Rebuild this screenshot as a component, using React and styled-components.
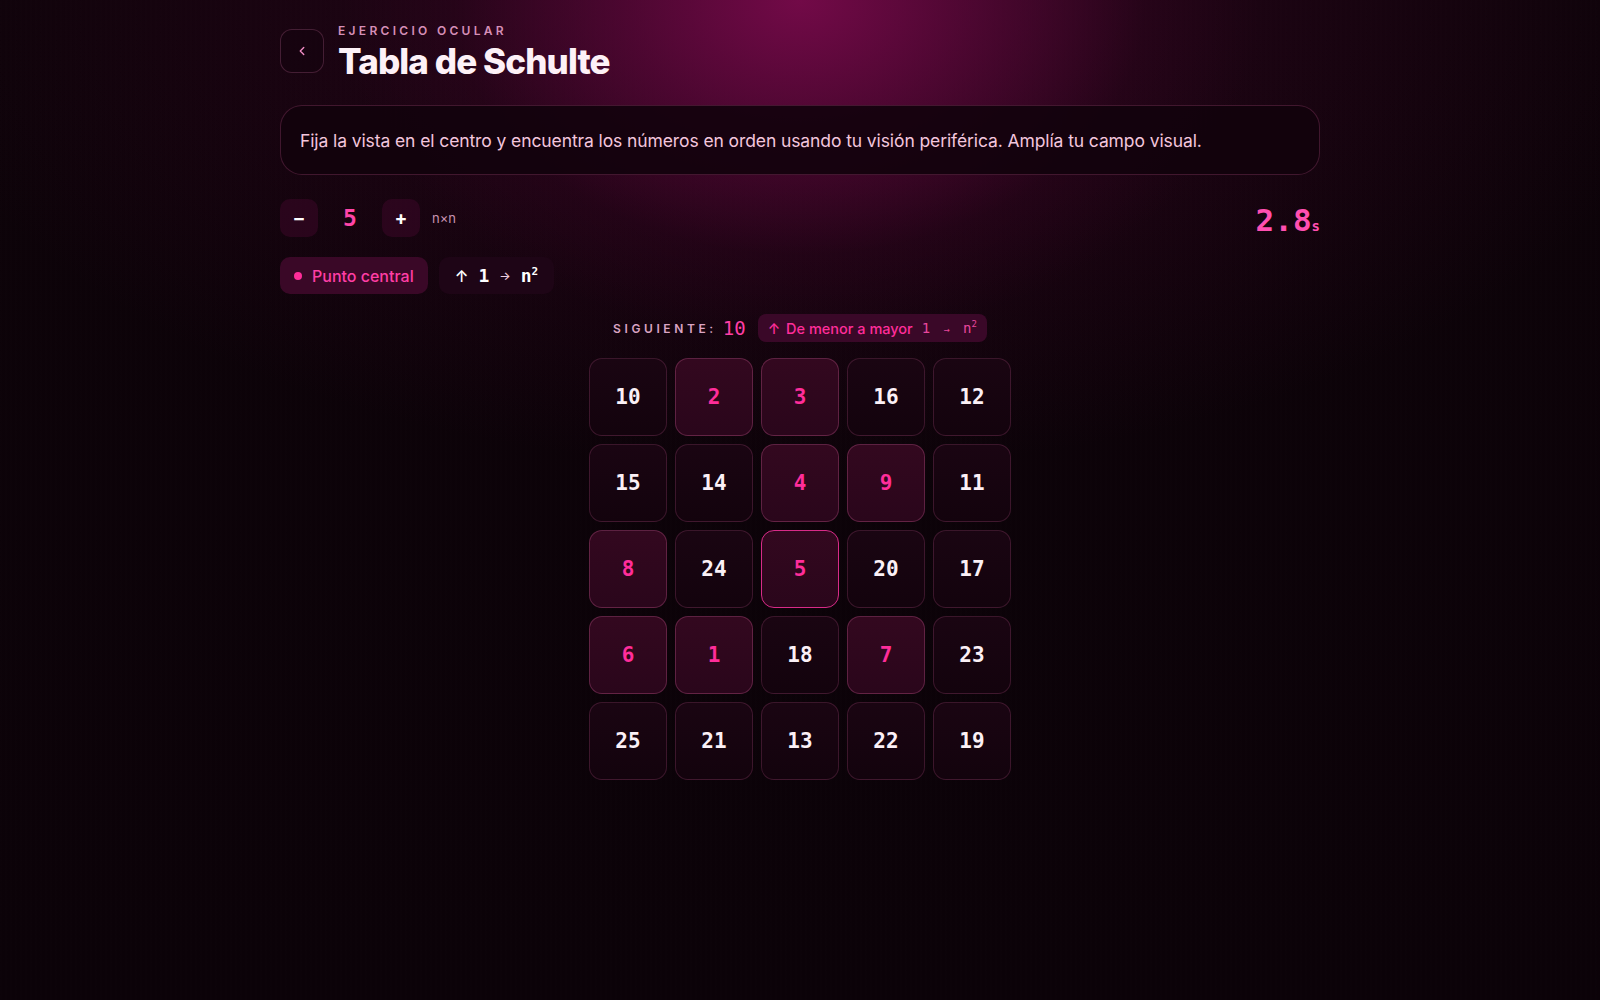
import styled, { createGlobalStyle, css } from "styled-components";

const GlobalStyle = createGlobalStyle`
  html, body {
    margin: 0;
    padding: 0;
    background: #0b0208;
  }
  body {
    font-family: "Inter", "Noto Sans", sans-serif;
    color: #fff;
    -webkit-font-smoothing: antialiased;
  }
  * { box-sizing: border-box; }
`;

const MONO = `"DejaVu Sans Mono", "Liberation Mono", monospace`;

// 5x5 layout as shown, next to find is 10
const cells = [10, 2, 3, 16, 12, 15, 14, 4, 9, 11, 8, 24, 5, 20, 17, 6, 1, 18, 7, 23, 25, 21, 13, 22, 19];
const nextNumber = 10;
const size = 5;

function App() {
  const center = Math.floor((size * size) / 2);
  return (
    <>
      <GlobalStyle />
      <Page>
        <Main>
          <Header>
            <BackButton aria-label="Volver">
              <svg width="14" height="14" viewBox="0 0 24 24" fill="none">
                <path d="M15 6l-6 6 6 6" stroke="#f08cc4" strokeWidth="2.4" strokeLinecap="round" strokeLinejoin="round" />
              </svg>
            </BackButton>
            <TitleBlock>
              <Kicker>EJERCICIO OCULAR</Kicker>
              <Title>Tabla de Schulte</Title>
            </TitleBlock>
          </Header>

          <Description>
            Fija la vista en el centro y encuentra los números en orden usando tu visión periférica. Amplía tu campo visual.
          </Description>

          <Controls>
            <Stepper>
              <StepButton>–</StepButton>
              <SizeValue>{size}</SizeValue>
              <StepButton>+</StepButton>
              <SizeLabel>n×n</SizeLabel>
            </Stepper>
            <Timer>
              2.8<small>s</small>
            </Timer>
          </Controls>

          <Chips>
            <Chip $active>
              <Dot />
              Punto central
            </Chip>
            <Chip>
              <Arrow>↑</Arrow>
              <MonoBold>1</MonoBold>
              <SmallArrow>→</SmallArrow>
              <MonoBold>
                n<sup>2</sup>
              </MonoBold>
            </Chip>
          </Chips>

          <NextRow>
            <NextLabel>SIGUIENTE:</NextLabel>
            <NextValue>{nextNumber}</NextValue>
            <OrderChip>
              <span>↑</span>
              <span>De menor a mayor</span>
              <OrderRange>
                1 <i>→</i> n<sup>2</sup>
              </OrderRange>
            </OrderChip>
          </NextRow>

          <Grid $n={size}>
            {cells.map((v, i) => (
              <Cell key={v} $found={v < nextNumber} $center={i === center}>
                {v}
              </Cell>
            ))}
          </Grid>
        </Main>
      </Page>
    </>
  );
}

const Page = styled.div`
  min-height: 1000px;
  background:
    radial-gradient(ellipse 460px 340px at 50% 0%, rgba(118, 10, 74, 0.95) 0%, rgba(98, 8, 62, 0.62) 40%, rgba(60, 4, 38, 0.24) 75%, rgba(12, 2, 9, 0) 100%),
    radial-gradient(ellipse 900px 470px at 50% 0%, rgba(70, 6, 45, 0.5) 0%, rgba(12, 2, 9, 0) 100%),
    repeating-linear-gradient(90deg, rgba(255, 255, 255, 0.004) 0 2px, rgba(0, 0, 0, 0) 2px 5px),
    linear-gradient(180deg, #0d0309 0%, #0b0208 100%);
  padding-top: 24px;
`;

const Main = styled.main`
  width: 1040px;
  margin: 0 auto;
  display: flex;
  flex-direction: column;
`;

const Header = styled.header`
  display: flex;
  align-items: center;
  gap: 14px;
`;

const BackButton = styled.button`
  width: 44px;
  height: 44px;
  border-radius: 12px;
  border: 1px solid rgba(255, 140, 200, 0.2);
  background: rgba(20, 3, 14, 0.55);
  display: flex;
  align-items: center;
  justify-content: center;
  padding: 0;
`;

const TitleBlock = styled.div`
  display: flex;
  flex-direction: column;
  gap: 6px;
`;

const Kicker = styled.div`
  font-size: 12px;
  font-weight: 600;
  letter-spacing: 3.3px;
  color: #d68fb7;
  line-height: 14px;
`;

const Title = styled.h1`
  margin: 0;
  font-size: 35px;
  font-weight: 800;
  letter-spacing: -0.9px;
  line-height: 34px;
  color: #fdf1f7;
`;

const Description = styled.div`
  margin-top: 27px;
  height: 70px;
  display: flex;
  align-items: center;
  padding: 0 19px;
  border-radius: 22px;
  border: 1px solid rgba(255, 110, 185, 0.2);
  background: rgba(18, 2, 12, 0.9);
  font-size: 17.5px;
  color: #f3c6dd;
  letter-spacing: -0.1px;
`;

const Controls = styled.div`
  margin-top: 24px;
  display: flex;
  align-items: center;
  justify-content: space-between;
  height: 38px;
`;

const Stepper = styled.div`
  display: flex;
  align-items: center;
`;

const StepButton = styled.button`
  width: 38px;
  height: 38px;
  border-radius: 10px;
  border: none;
  background: rgba(60, 8, 40, 0.55);
  color: #fff;
  font-family: "Inter", sans-serif;
  font-size: 19px;
  font-weight: 700;
  display: flex;
  align-items: center;
  justify-content: center;
  padding: 0;
`;

const SizeValue = styled.span`
  width: 64px;
  text-align: center;
  font-family: ${MONO};
  font-weight: 700;
  font-size: 23px;
  color: #ff45a8;
`;

const SizeLabel = styled.span`
  margin-left: 12px;
  font-size: 13px;
  color: #c893b1;
`;

const Timer = styled.div`
  font-family: ${MONO};
  font-weight: 700;
  font-size: 31px;
  color: #ff4fb0;
  line-height: 1;
  padding-top: 4px;
  small {
    font-size: 14px;
    font-weight: 700;
  }
`;

const Chips = styled.div`
  margin-top: 20px;
  display: flex;
  gap: 11px;
`;

const Chip = styled.div`
  height: 37px;
  padding: 0 14px;
  border-radius: 10px;
  display: flex;
  align-items: center;
  gap: 10px;
  font-size: 16px;
  font-weight: 500;
  ${(p) =>
    p.$active
      ? css`
          background: #3a0827;
          color: #ff3ea5;
        `
      : css`
          background: #1e0516;
          color: #fff;
          padding: 0 16px;
        `}
`;

const Dot = styled.span`
  width: 8px;
  height: 8px;
  border-radius: 50%;
  background: #ff2d9a;
`;

const Arrow = styled.span`
  font-size: 16px;
  color: #fff;
`;

const SmallArrow = styled.span`
  font-size: 12px;
  color: #f0d0e0;
`;

const MonoBold = styled.span`
  font-family: ${MONO};
  font-weight: 700;
  font-size: 18px;
  sup {
    font-size: 11px;
    vertical-align: 7px;
    line-height: 0;
  }
`;

const NextRow = styled.div`
  margin-top: 20px;
  display: flex;
  align-items: center;
  justify-content: center;
  gap: 10px;
  height: 28px;
`;

const NextLabel = styled.span`
  font-size: 12px;
  font-weight: 600;
  letter-spacing: 3.6px;
  color: #dba4c4;
`;

const NextValue = styled.span`
  font-family: ${MONO};
  font-size: 19px;
  font-weight: 500;
  color: #ff3ea5;
  margin-left: -4px;
  margin-right: 2px;
`;

const OrderChip = styled.div`
  height: 28px;
  padding: 0 10px;
  border-radius: 8px;
  background: #3a0828;
  color: #ff2d9a;
  font-size: 14.5px;
  font-weight: 500;
  display: flex;
  align-items: center;
  gap: 6px;
`;

const OrderRange = styled.span`
  margin-left: 3px;
  font-family: ${MONO};
  font-size: 14px;
  color: #e8479d;
  i {
    font-style: normal;
    font-size: 10px;
    margin: 0 5px;
  }
  sup {
    font-size: 9px;
    vertical-align: 6px;
    line-height: 0;
  }
`;

const Grid = styled.div`
  margin: 16px auto 0;
  display: grid;
  grid-template-columns: repeat(${(p) => p.$n}, 78px);
  grid-auto-rows: 78px;
  gap: 8px;
`;

const Cell = styled.div`
  border-radius: 13px;
  display: flex;
  align-items: center;
  justify-content: center;
  font-family: ${MONO};
  font-weight: 700;
  font-size: 21px;
  border: 1px solid rgba(255, 120, 190, 0.17);
  background: linear-gradient(180deg, #1a0512 0%, #13030d 100%);
  color: #fbf0f6;
  ${(p) =>
    p.$found &&
    css`
      background: linear-gradient(180deg, #33081f 0%, #2a061b 100%);
      border-color: rgba(255, 120, 190, 0.24);
      color: #ff2d9a;
    `}
  ${(p) =>
    p.$center &&
    css`
      border: 1.5px solid #d82b88;
    `}
`;

export default App;
